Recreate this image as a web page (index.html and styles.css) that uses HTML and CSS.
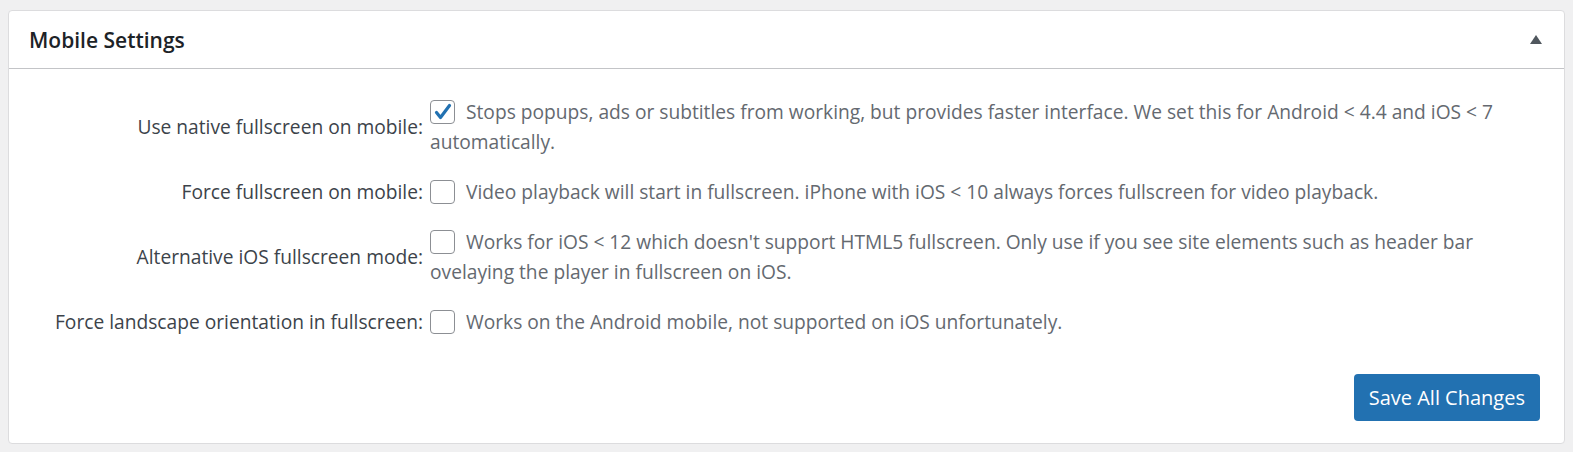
FILE: index.html
```html
<!DOCTYPE html>
<html lang="en">
<head>
    <meta charset="UTF-8">
    <title>Mobile Settings</title>
    <link rel="stylesheet" href="styles.css">
</head>
<body>
    <div class="postbox">
        <div class="postbox-header">
            <h2>Mobile Settings</h2>
            <span class="toggle-arrow"></span>
        </div>
        <div class="inside">
            <div class="form-table">
                <div class="label">Use native fullscreen on mobile:</div>
                <div class="field">
                    <span class="checkbox checked">
                        <svg width="25" height="24" viewBox="0 0 25 24"><path d="M6.5 12.5 L10.5 17.5 L19.5 5.5" fill="none" stroke="#2271b1" stroke-width="3.2" stroke-linecap="round" stroke-linejoin="round"/></svg>
                    </span>Stops popups, ads or subtitles from working, but provides faster interface. We set this for Android &lt; 4.4 and iOS &lt; 7 automatically.
                </div>

                <div class="label">Force fullscreen on mobile:</div>
                <div class="field">
                    <span class="checkbox"></span>Video playback will start in fullscreen. iPhone with iOS &lt; 10 always forces fullscreen for video playback.
                </div>

                <div class="label">Alternative iOS fullscreen mode:</div>
                <div class="field">
                    <span class="checkbox"></span>Works for iOS &lt; 12 which doesn't support HTML5 fullscreen. Only use if you see site elements such as header bar ovelaying the player in fullscreen on iOS.
                </div>

                <div class="label">Force landscape orientation in fullscreen:</div>
                <div class="field">
                    <span class="checkbox"></span>Works on the Android mobile, not supported on iOS unfortunately.
                </div>
            </div>
            <div class="actions">
                <button class="button-primary">Save All Changes</button>
            </div>
        </div>
    </div>
</body>
</html>
```

FILE: styles.css
```css
body {
    margin: 0;
    padding: 10px 8px;
    background-color: #f0f0f1;
    font-family: "Open Sans", Arial, sans-serif;
    color: #3c434a;
}
.postbox {
    background-color: #fff;
    border: 1px solid #dcdcde;
    border-radius: 4px;
}
.postbox-header {
    display: flex;
    align-items: center;
    justify-content: space-between;
    height: 57px;
    padding: 0 20px;
    border-bottom: 1px solid #c3c4c7;
}
.postbox-header h2 {
    margin: 0;
    font-size: 21px;
    font-weight: 600;
    color: #1d2327;
}
.toggle-arrow {
    width: 0;
    height: 0;
    margin-right: 2px;
    border-left: 6px solid transparent;
    border-right: 6px solid transparent;
    border-bottom: 9px solid #50575e;
}
.inside {
    padding: 28px 24px 22px 0;
}
.form-table {
    display: grid;
    grid-template-columns: 414px 1fr;
    column-gap: 7px;
    row-gap: 20px;
    align-items: center;
    font-size: 19.2px;
    line-height: 30px;
}
.label {
    text-align: right;
    color: #3c434a;
}
.field {
    color: #646970;
}
.checkbox {
    display: inline-block;
    width: 23px;
    height: 22px;
    margin-right: 11px;
    border: 1px solid #8c8f94;
    border-radius: 4px;
    vertical-align: middle;
    position: relative;
    top: -2px;
}
.checkbox svg {
    display: block;
    margin: -1px;
}
.actions {
    display: flex;
    justify-content: flex-end;
    margin-top: 37px;
}
.button-primary {
    height: 47px;
    padding: 0 15px;
    background-color: #2271b1;
    color: #fff;
    border: none;
    border-radius: 4px;
    font-family: "Open Sans", Arial, sans-serif;
    font-size: 20px;
    cursor: pointer;
}
```
